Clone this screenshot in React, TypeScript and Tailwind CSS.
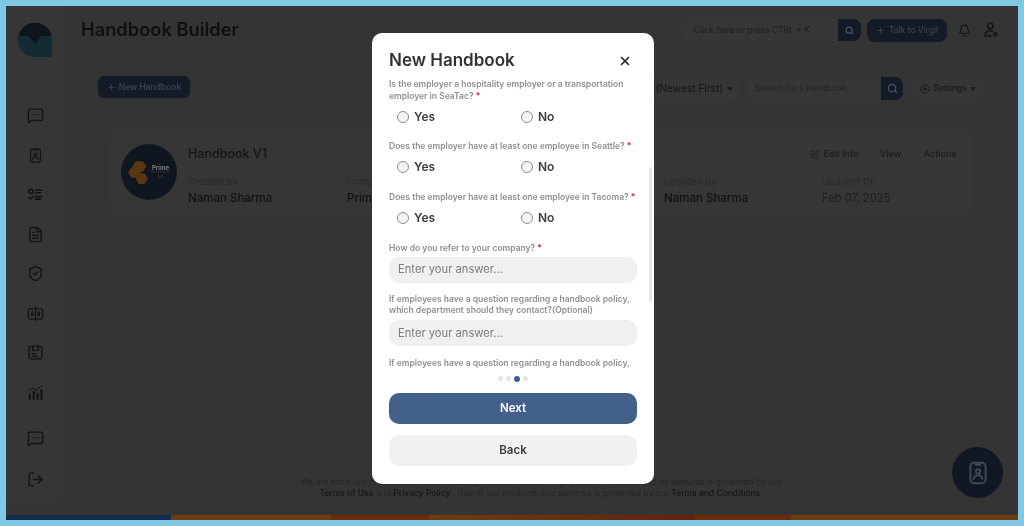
import React from 'react';
import { Bell, FileText, LogOut, MessageSquareMore, Plus, Search, ShieldCheck, SquarePen, X } from 'lucide-react';

const iconClass = 'w-[17px] h-[17px] text-[#141414]';
const labelClass = 'text-[8.500px] leading-[11.500px] font-semibold text-[#8f8f8f]';

function BadgeIcon({ className }: { className: string }) {
  return (
    <svg viewBox="0 0 24 24" fill="none" stroke="currentColor" strokeWidth="1.800" strokeLinecap="round" className={className}>
      <rect x="5" y="2.500" width="14" height="19" rx="3.500" />
      <path d="M10 2.500v2h4v-2" />
      <circle cx="12" cy="10.500" r="2" />
      <path d="M8 17.500c.4-2.400 2-3.500 4-3.500s3.600 1.100 4 3.500" />
    </svg>
  );
}

function ChecklistIcon() {
  return (
    <svg viewBox="0 0 24 24" fill="none" stroke="currentColor" strokeWidth="2.200" strokeLinecap="round" className={iconClass}>
      <circle cx="5.500" cy="7.500" r="3" />
      <path d="M12 6h9M12 9.500h7M2.500 16l2.500 2.500 4-4M12 15h9M12 18.500h7" />
    </svg>
  );
}

function BookIcon() {
  return (
    <svg viewBox="0 0 24 24" fill="none" stroke="currentColor" strokeWidth="1.800" strokeLinecap="round" className={iconClass}>
      <rect x="2" y="5" width="20" height="15" rx="3" />
      <path d="M12 3v19M6 15l1.500-5 1.500 5M15.500 10v5h1.500a1.300 1.300 0 0 0 0-2.500 1.300 1.300 0 0 0 0-2.500z" />
    </svg>
  );
}

function FloppyIcon() {
  return (
    <svg viewBox="0 0 24 24" fill="none" stroke="currentColor" strokeWidth="2" strokeLinecap="round" className={iconClass}>
      <rect x="3" y="3" width="18" height="18" rx="2.500" />
      <path d="M8 3v6h8V3M7.500 14h4M7.500 17.500h7" />
    </svg>
  );
}

function ChartIcon() {
  return (
    <svg viewBox="0 0 24 24" fill="none" stroke="currentColor" strokeLinecap="round" className={iconClass}>
      <path d="M3 9l5-3 5 3 7-6" strokeWidth="1.500" strokeDasharray="2 2" />
      <path d="M4 15v6M9.500 11v10M15 14v7M20.500 9v12" strokeWidth="3" />
    </svg>
  );
}

function UserGearIcon() {
  return (
    <svg viewBox="0 0 24 24" fill="none" stroke="currentColor" strokeWidth="2.200" strokeLinecap="round" className="w-[16px] h-[16px] text-[#141414]">
      <circle cx="11" cy="6" r="4" />
      <path d="M3 21c0-5 3-8 8-8 1.500 0 2.500.3 3.500.8M3 21h9" />
      <circle cx="18.500" cy="18.500" r="2.500" />
    </svg>
  );
}

function SettingsIcon() {
  return (
    <svg viewBox="0 0 24 24" fill="none" stroke="currentColor" strokeWidth="2.400" className="w-[10px] h-[10px]">
      <circle cx="12" cy="12" r="10" />
      <circle cx="12" cy="12" r="3" fill="currentColor" />
    </svg>
  );
}

function Caret() {
  return (
    <svg viewBox="0 0 8 5" className="w-[6px] h-[4px] fill-current">
      <path d="M0 0h8L4 5z" />
    </svg>
  );
}

function Logo() {
  return (
    <svg viewBox="0 0 34 34" className="w-[34px] h-[34px]">
      <path d="M0 17a17 17 0 0 1 34 0v1H24L17 26 10 18H0z" fill="#0f151b" />
      <path d="M0 13h11l6 8 6-8h11v21H17A17 17 0 0 1 0 17z" fill="#152b34" />
      <path d="M0 17a17 17 0 0 1 34 0v-4H23l-6 8-6-8H0z" fill="#0f151b" />
    </svg>
  );
}

function PrimeAvatar() {
  return (
    <div className="mt-[1px] w-14 h-14 rounded-full bg-[#10161f] flex items-center justify-center gap-[2px] shrink-0">
      <svg viewBox="0 0 24 26" className="w-[21px] h-[23px]">
        <path d="M9 0h8l4 6-4 6H9L5 6z" fill="#5a3612" />
        <path d="M4 7h7l3.500 6L11 19H4l-4-6z" fill="#5a3612" />
        <path d="M12 14h7l4 6-4 6h-7l-3-6z" fill="#5a3612" />
      </svg>
      <div className="flex flex-col items-center leading-none">
        <span className="text-[6px] font-bold text-[#7e7e7e]">Prime</span>
        <span className="text-[3.500px] tracking-[0.500px] text-[#4a4c52]">Solutions</span>
        <span className="text-[3px] mt-[1px] text-[#4a4c52]">LLC</span>
      </div>
    </div>
  );
}

function CardField({ label, value, strong = true, className }: { label: string; value: string; strong?: boolean; className: string }) {
  return (
    <div className={className}>
      <div className="text-[9.500px] leading-[12px] text-[#2a2a2a]">{label}</div>
      <div className={`mt-[2px] leading-[16px] whitespace-nowrap ${strong ? 'text-[11.500px] font-medium text-[#121212]' : 'text-[11.200px] text-[#1f1f1f]'}`}>{value}</div>
    </div>
  );
}

function GhostButton({ children, className }: { children: React.ReactNode; className: string }) {
  return (
    <div className={`h-[22px] flex items-center justify-center gap-1 rounded-md bg-[#373737] text-[9px] font-medium text-[#1c1c1c] ${className}`}>
      {children}
    </div>
  );
}

function RadioRow({ question }: { question: string }) {
  return (
    <div className="mb-[18.200px]">
      <p className={labelClass}>
        {question} <span className="text-[#c81e2c]">*</span>
      </p>
      <div className="flex mt-[8px] h-[13px] items-center pl-[8px]">
        {['Yes', 'No'].map((opt) => (
          <label key={opt} className="w-[124px] shrink-0 flex items-center gap-[5px] text-[12px] font-semibold text-[#3c3c3c]">
            <span className="w-[12px] h-[12px] rounded-full border border-[#8f8f8f] bg-[#f4f4f4]" />
            {opt}
          </label>
        ))}
      </div>
    </div>
  );
}

function AnswerField() {
  return (
    <div className="mt-[2.500px] h-[26px] rounded-[10px] bg-[#f0f0f0] px-[9px] flex items-center text-[11.200px] text-[#7d7d7d]">
      Enter your answer...
    </div>
  );
}

export default function App() {
  return (
    <div className="w-[1024px] h-[526px] bg-[#7fc9e6] p-[6px] font-['Inter',sans-serif] overflow-hidden">
      <div className="relative w-[1012px] h-[514px] bg-[#343434] overflow-hidden flex flex-col blur-[0.4px]">
        <div className="flex-1 min-h-0 flex">
          {/* sidebar */}
          <aside className="w-[58px] h-[496px] shrink-0 bg-[#363636] rounded-br-xl flex flex-col items-center pt-[17px]">
            <Logo />
            <div className="w-[44px] h-px bg-[#383838] mt-[29px] mb-[20px]" />
            <div className="flex flex-col items-center gap-[22.500px]">
              <MessageSquareMore className={iconClass} />
              <BadgeIcon className={iconClass} />
              <ChecklistIcon />
              <FileText className={iconClass} />
              <ShieldCheck className={iconClass} />
              <BookIcon />
              <FloppyIcon />
              <ChartIcon />
            </div>
            <MessageSquareMore className={`${iconClass} mt-[29px]`} />
            <LogOut className={`${iconClass} mt-[24px]`} />
          </aside>

          <main className="flex-1 min-w-0 flex flex-col">
            {/* top bar */}
            <header className="h-[48px] shrink-0 flex items-center pl-[17px] pr-[19px]">
              <h1 className="text-[18.300px] font-semibold text-[#101010] whitespace-nowrap">Handbook Builder</h1>
              <div className="ml-auto flex items-center">
                <div className="w-[154px] h-[22px] bg-[#363636] rounded-l-md pl-[10px] flex items-center text-[8.500px] text-[#1f1f1f] whitespace-nowrap">
                  Click here or press CTRL + K
                </div>
                <div className="w-[23px] h-[22px] bg-[#141a26] rounded-r-lg flex items-center justify-center">
                  <Search className="w-[9px] h-[9px] text-[#4a5566]" strokeWidth={3} />
                </div>
                <div className="ml-[6px] w-[80px] h-[23px] bg-[#141a26] rounded-lg flex items-center justify-center gap-1 text-[8.500px] text-[#3e4858]">
                  <Plus className="w-[9px] h-[9px]" />
                  Talk to Virgil
                </div>
                <Bell className="ml-[11px] w-[13px] h-[13px] text-[#141414]" />
                <div className="ml-[12px]"><UserGearIcon /></div>
              </div>
            </header>

            {/* page panel */}
            <section className="ml-[18px] mr-[23px] h-[397px] mt-[6px] rounded-xl border border-[#373737] pl-[15px] pr-[9px] pt-[15px]">
              <div className="flex items-start h-[24px]">
                <div className="w-[92px] h-[22px] bg-[#141a26] rounded-md flex items-center justify-center gap-[3px] text-[8.500px] font-medium text-[#3e4858]">
                  <Plus className="w-[9px] h-[9px]" />
                  New Handbook
                </div>
                <div className="ml-auto mt-[1px] flex items-center">
                  <div className="w-[100px] h-[23px] mr-[7px] bg-[#363636] rounded-lg flex items-center justify-end gap-[4px] pr-[6px] text-[10px] font-medium text-[#1a1a1a] whitespace-nowrap">
                    (Newest First)
                    <Caret />
                  </div>
                  <div className="w-[135px] h-[23px] bg-[#363636] rounded-l-lg pl-[9px] flex items-center text-[8.500px] text-[#262626] whitespace-nowrap">
                    Search for a handbook...
                  </div>
                  <div className="w-[22px] h-[23px] bg-[#141a26] rounded-r-lg flex items-center justify-center">
                    <Search className="w-[11px] h-[11px] text-[#4a5566]" strokeWidth={2.500} />
                  </div>
                  <div className="ml-[8px] w-[74px] h-[23px] bg-[#363636] rounded-lg flex items-center justify-center gap-[3px] text-[8.500px] font-semibold text-[#1c1c1c]">
                    <SettingsIcon />
                    Settings
                    <Caret />
                  </div>
                </div>
              </div>

              {/* handbook card */}
              <div className="mt-[29px] ml-[12px] mr-[11px] h-[86px] rounded-xl bg-[#363636] flex items-start pt-[14px] pl-[11px] pr-[10px]">
                <PrimeAvatar />
                <div className="ml-[11px] flex-1 min-w-0">
                  <div className="flex items-center h-[22px]">
                    <h2 className="text-[12.500px] font-medium text-[#151515]">Handbook V1</h2>
                    <div className="ml-auto flex items-center gap-[7px]">
                      <GhostButton className="w-[61px]">
                        <SquarePen className="w-[9px] h-[9px]" />
                        Edit Info
                      </GhostButton>
                      <GhostButton className="w-[37px]">View</GhostButton>
                      <GhostButton className="w-[48px]">Actions</GhostButton>
                    </div>
                  </div>
                  <div className="flex mt-[11px]">
                    <CardField className="w-[159px]" label="Created By" value="Naman Sharma" />
                    <CardField className="w-[317px]" label="Company" value="Prime Solutions" />
                    <CardField className="w-[158px]" label="Updated By" value="Naman Sharma" />
                    <CardField className="w-[100px]" label="Updated On" value="Feb 07, 2025" strong={false} />
                  </div>
                </div>
              </div>
            </section>

            {/* footer note */}
            <footer className="mt-[20px] text-center text-[8.500px] leading-[11px] text-[#262626] whitespace-nowrap">
              <p>We are not a law firm and do not provide legal advice. Use of Virgil platform, website and its features is governed by our</p>
              <p>
                <b className="font-medium text-[#161616]">Terms of Use</b> and <b className="font-medium text-[#161616]">Privacy Policy</b> . Use of our products and services is governed by our <b className="font-medium text-[#161616]">Terms and Conditions</b>.
              </p>
            </footer>
          </main>
        </div>

        {/* bottom strip of the page behind */}
        <div className="h-[5px] shrink-0 flex">
          <div className="w-[165px] bg-[#12304e]" />
          <div className="w-[160px] bg-[#6e3c10]" />
          <div className="w-[98px] bg-[#6a2a0c]" />
          <div className="w-[265px] bg-linear-to-r from-[#6e3c10] to-[#62220c]" />
          <div className="w-[97px] bg-[#6a2a0c]" />
          <div className="flex-1 bg-[#6e3c10]" />
        </div>

        {/* assistant button */}
        <div className="absolute left-[946px] top-[441px] w-[51px] h-[51px] rounded-full bg-[#111824] flex items-center justify-center">
          <BadgeIcon className="w-[26px] h-[26px] text-[#3f4857]" />
        </div>

        {/* modal */}
        <div className="absolute left-[366px] top-[27px] w-[282px] h-[451px] bg-white rounded-[10px] flex flex-col px-[17px]">
          <div className="h-[45px] shrink-0 flex items-center justify-between pt-[11px]">
            <h2 className="text-[17px] font-semibold text-[#333333]">New Handbook</h2>
            <X className="w-[14px] h-[14px] mr-[5px] text-[#2a2a2a]" strokeWidth={3} />
          </div>
          <div className="h-[291px] shrink-0 overflow-hidden pt-[1px]">
            <RadioRow question="Is the employer a hospitality employer or a transportation employer in SeaTac?" />
            <RadioRow question="Does the employer have at least one employee in Seattle?" />
            <RadioRow question="Does the employer have at least one employee in Tacoma?" />
            <p className={labelClass}>
              How do you refer to your company? <span className="text-[#c81e2c]">*</span>
            </p>
            <AnswerField />
            <p className={`mt-[11px] ${labelClass}`}>
              If employees have a question regarding a handbook policy, which department should they contact?(Optional)
            </p>
            <div className="pt-[1px]">
              <AnswerField />
            </div>
            <p className={`mt-[12px] ${labelClass}`}>
              If employees have a question regarding a handbook policy, who should they contact?
            </p>
          </div>
          <div className="h-[24px] shrink-0 pb-[5px] flex items-center justify-center gap-[3px]">
            <span className="w-[5px] h-[5px] rounded-full bg-[#e4e4e4]" />
            <span className="w-[5px] h-[5px] rounded-full bg-[#e4e4e4]" />
            <span className="w-[6px] h-[6px] rounded-full bg-[#3f5f8a]" />
            <span className="w-[5px] h-[5px] rounded-full bg-[#e4e4e4]" />
          </div>
          <button className="h-[31px] shrink-0 rounded-[10px] bg-[#426089] text-white text-[11.500px] font-semibold">Next</button>
          <button className="h-[31px] shrink-0 mt-[11px] rounded-[10px] bg-[#f1f1f1] text-[#3a3a3a] text-[11.500px] font-semibold">Back</button>

          {/* scrollbar */}
          <div className="absolute right-[2px] top-[134px] w-[3px] h-[135px] rounded-full bg-[#e6e6e6]" />
        </div>
      </div>
    </div>
  );
}
